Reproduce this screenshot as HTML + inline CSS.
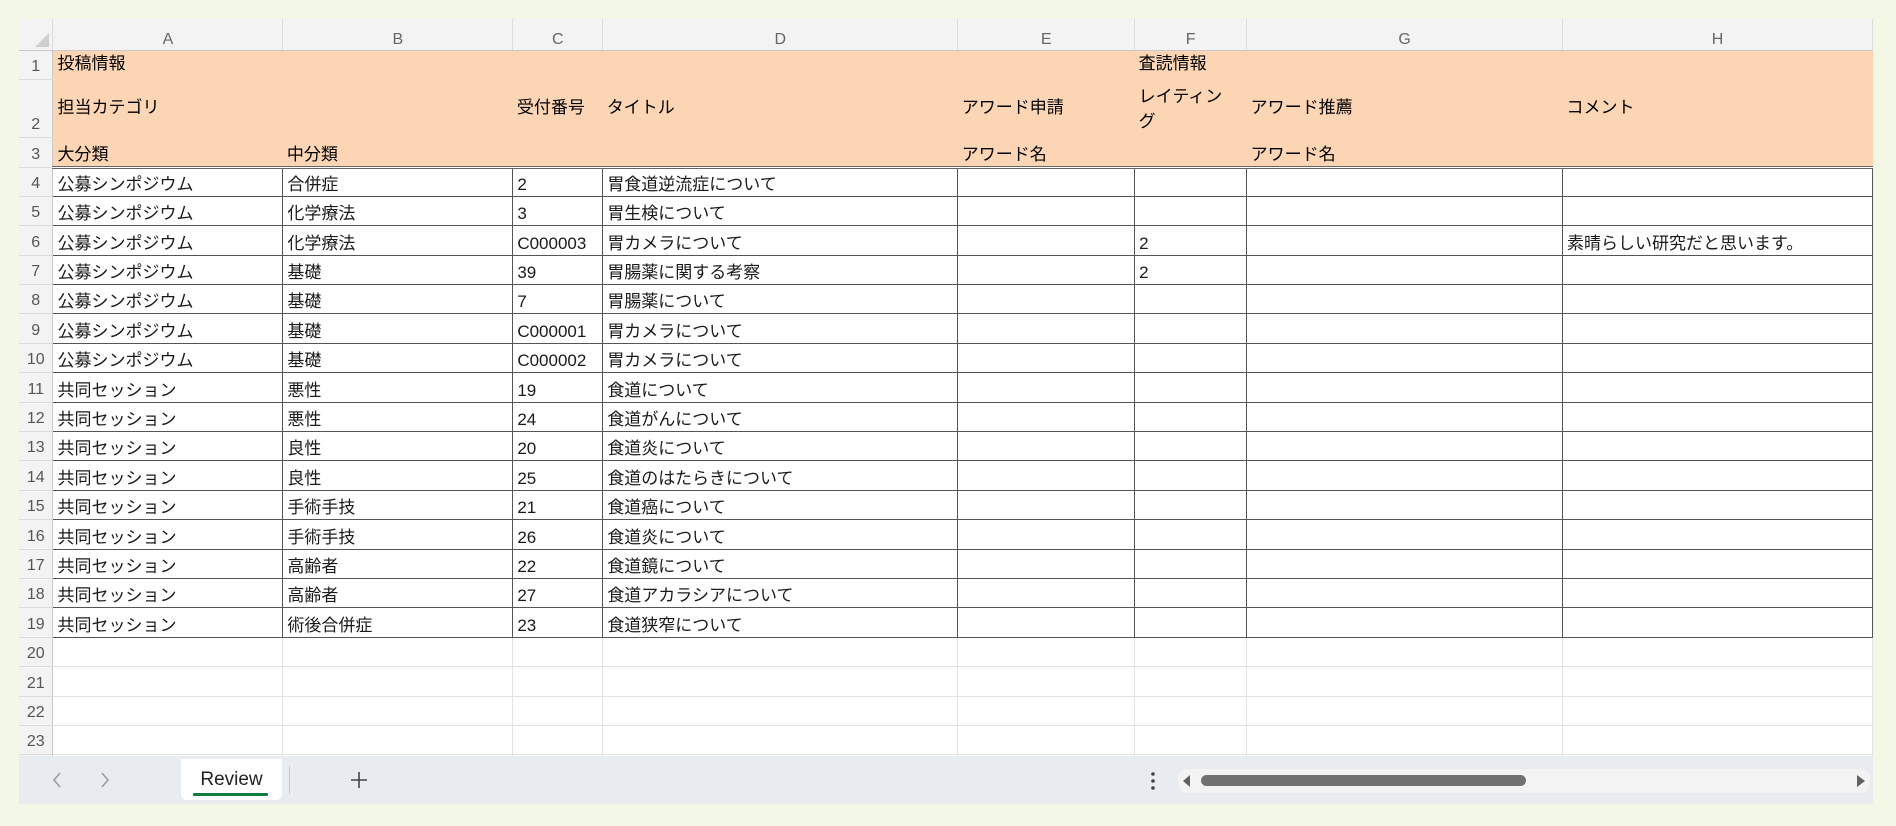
<!DOCTYPE html>
<html><head><meta charset="utf-8"><style>
body{margin:0;width:1896px;height:826px;background:#f3f8e6;position:relative;overflow:hidden;font-family:"Liberation Sans","Noto Sans CJK JP",sans-serif;}
#sheet{position:absolute;left:19px;top:19px;width:1854px;height:785px;background:#fff;overflow:hidden;}
table{border-collapse:collapse;table-layout:fixed;position:absolute;left:0;top:0;}
td{padding:0 3px 1px 4px;font-size:17px;color:#1a1a1a;white-space:nowrap;overflow:hidden;vertical-align:bottom;line-height:20px;}
tr.ch td{background:#f3f3f3;color:#666;font-size:16px;text-align:center;vertical-align:bottom;padding:0 0 0;border-right:1px solid #dcdcdc;border-bottom:1px solid #c8c8c8;}
td.rn{background:#f3f3f3;color:#555;font-size:16px;text-align:center;padding:0 0 2px;border-right:1px solid #c8c8c8;border-bottom:1px solid #dcdcdc;}
tr.h td:not(.rn){background:#fcd5b4;color:#000;}
tr.h3 td:not(.rn){border-bottom:3px double #666;}
tr.d td:not(.rn){border:1px solid #555;}
tr.e td:not(.rn){border-right:1px solid #e2e2e2;border-bottom:1px solid #e2e2e2;}
#tabs{position:absolute;left:0;top:737px;width:1854px;height:48px;background:#e8ebf0;}
</style></head><body>
<div id="sheet">
<table>
<colgroup><col style="width:34px"><col style="width:230px"><col style="width:230px"><col style="width:90px"><col style="width:355px"><col style="width:177px"><col style="width:112px"><col style="width:316px"><col style="width:310px"></colgroup>
<tr class="ch" style="height:31px"><td style="position:relative"><svg width="14" height="14" style="position:absolute;right:3px;bottom:3px"><path d="M14 0V14H0Z" fill="#cfcfcf"/></svg></td><td>A</td><td>B</td><td>C</td><td>D</td><td>E</td><td>F</td><td>G</td><td>H</td></tr>
<tr class="h" style="height:29px"><td class="rn">1</td><td style="vertical-align:middle">投稿情報</td><td></td><td></td><td></td><td></td><td style="vertical-align:middle">査読情報</td><td></td><td></td></tr>
<tr class="h" style="height:58px"><td class="rn">2</td><td style="vertical-align:middle">担当カテゴリ</td><td></td><td style="vertical-align:middle">受付番号</td><td style="vertical-align:middle">タイトル</td><td style="vertical-align:middle">アワード申請</td><td style="white-space:normal;line-height:25px;padding-bottom:3px">レイティン<br>グ</td><td style="vertical-align:middle">アワード推薦</td><td style="vertical-align:middle">コメント</td></tr>
<tr class="h h3" style="height:30px"><td class="rn">3</td><td>大分類</td><td>中分類</td><td></td><td></td><td>アワード名</td><td></td><td>アワード名</td><td></td></tr>
<tr class="d" style="height:29.4px"><td class="rn">4</td><td>公募シンポジウム</td><td>合併症</td><td>2</td><td>胃食道逆流症について</td><td></td><td></td><td></td><td></td></tr>
<tr class="d" style="height:29.4px"><td class="rn">5</td><td>公募シンポジウム</td><td>化学療法</td><td>3</td><td>胃生検について</td><td></td><td></td><td></td><td></td></tr>
<tr class="d" style="height:29.4px"><td class="rn">6</td><td>公募シンポジウム</td><td>化学療法</td><td>C000003</td><td>胃カメラについて</td><td></td><td>2</td><td></td><td>素晴らしい研究だと思います。</td></tr>
<tr class="d" style="height:29.4px"><td class="rn">7</td><td>公募シンポジウム</td><td>基礎</td><td>39</td><td>胃腸薬に関する考察</td><td></td><td>2</td><td></td><td></td></tr>
<tr class="d" style="height:29.4px"><td class="rn">8</td><td>公募シンポジウム</td><td>基礎</td><td>7</td><td>胃腸薬について</td><td></td><td></td><td></td><td></td></tr>
<tr class="d" style="height:29.4px"><td class="rn">9</td><td>公募シンポジウム</td><td>基礎</td><td>C000001</td><td>胃カメラについて</td><td></td><td></td><td></td><td></td></tr>
<tr class="d" style="height:29.4px"><td class="rn">10</td><td>公募シンポジウム</td><td>基礎</td><td>C000002</td><td>胃カメラについて</td><td></td><td></td><td></td><td></td></tr>
<tr class="d" style="height:29.4px"><td class="rn">11</td><td>共同セッション</td><td>悪性</td><td>19</td><td>食道について</td><td></td><td></td><td></td><td></td></tr>
<tr class="d" style="height:29.4px"><td class="rn">12</td><td>共同セッション</td><td>悪性</td><td>24</td><td>食道がんについて</td><td></td><td></td><td></td><td></td></tr>
<tr class="d" style="height:29.4px"><td class="rn">13</td><td>共同セッション</td><td>良性</td><td>20</td><td>食道炎について</td><td></td><td></td><td></td><td></td></tr>
<tr class="d" style="height:29.4px"><td class="rn">14</td><td>共同セッション</td><td>良性</td><td>25</td><td>食道のはたらきについて</td><td></td><td></td><td></td><td></td></tr>
<tr class="d" style="height:29.4px"><td class="rn">15</td><td>共同セッション</td><td>手術手技</td><td>21</td><td>食道癌について</td><td></td><td></td><td></td><td></td></tr>
<tr class="d" style="height:29.4px"><td class="rn">16</td><td>共同セッション</td><td>手術手技</td><td>26</td><td>食道炎について</td><td></td><td></td><td></td><td></td></tr>
<tr class="d" style="height:29.4px"><td class="rn">17</td><td>共同セッション</td><td>高齢者</td><td>22</td><td>食道鏡について</td><td></td><td></td><td></td><td></td></tr>
<tr class="d" style="height:29.4px"><td class="rn">18</td><td>共同セッション</td><td>高齢者</td><td>27</td><td>食道アカラシアについて</td><td></td><td></td><td></td><td></td></tr>
<tr class="d" style="height:29.4px"><td class="rn">19</td><td>共同セッション</td><td>術後合併症</td><td>23</td><td>食道狭窄について</td><td></td><td></td><td></td><td></td></tr>
<tr class="e" style="height:29.4px"><td class="rn">20</td><td></td><td></td><td></td><td></td><td></td><td></td><td></td><td></td></tr>
<tr class="e" style="height:29.4px"><td class="rn">21</td><td></td><td></td><td></td><td></td><td></td><td></td><td></td><td></td></tr>
<tr class="e" style="height:29.4px"><td class="rn">22</td><td></td><td></td><td></td><td></td><td></td><td></td><td></td><td></td></tr>
<tr class="e" style="height:29.4px"><td class="rn">23</td><td></td><td></td><td></td><td></td><td></td><td></td><td></td><td></td></tr>
<tr class="e" style="height:29.4px"><td class="rn">24</td><td></td><td></td><td></td><td></td><td></td><td></td><td></td><td></td></tr>
</table>
<div id="tabs">
<svg style="position:absolute;left:32px;top:16px" width="12" height="16"><path d="M9 1L3 8L9 15" stroke="#999" stroke-width="1.5" fill="none"/></svg>
<svg style="position:absolute;left:80px;top:16px" width="12" height="16"><path d="M3 1L9 8L3 15" stroke="#999" stroke-width="1.5" fill="none"/></svg>
<div style="position:absolute;left:162px;top:3px;width:101px;height:41px;background:#fff;border-radius:0 0 6px 6px;"></div>
<div style="position:absolute;left:162px;top:13px;width:101px;text-align:center;font-size:19px;color:#222;">Review</div>
<div style="position:absolute;left:174px;top:37px;width:75px;height:3px;background:#107c41;border-radius:1px"></div>
<div style="position:absolute;left:270px;top:10px;width:1px;height:28px;background:#c8c8c8"></div>
<svg style="position:absolute;left:331px;top:15px" width="18" height="18"><path d="M9 1V17M1 9H17" stroke="#444" stroke-width="1.6"/></svg>
<svg style="position:absolute;left:1131px;top:15px" width="6" height="20"><circle cx="3" cy="3" r="1.8" fill="#444"/><circle cx="3" cy="10" r="1.8" fill="#444"/><circle cx="3" cy="17" r="1.8" fill="#444"/></svg>
<div style="position:absolute;left:1159px;top:13px;width:692px;height:24px;background:#f3f3f3;border-radius:10px"></div>
<svg style="position:absolute;left:1164px;top:19px" width="8" height="12"><path d="M7 0V12L0 6Z" fill="#606060"/></svg>
<div style="position:absolute;left:1182px;top:19px;width:325px;height:11px;background:#707070;border-radius:6px"></div>
<svg style="position:absolute;left:1838px;top:19px" width="8" height="12"><path d="M0 0V12L8 6Z" fill="#606060"/></svg>
</div>
</div>
</body></html>
